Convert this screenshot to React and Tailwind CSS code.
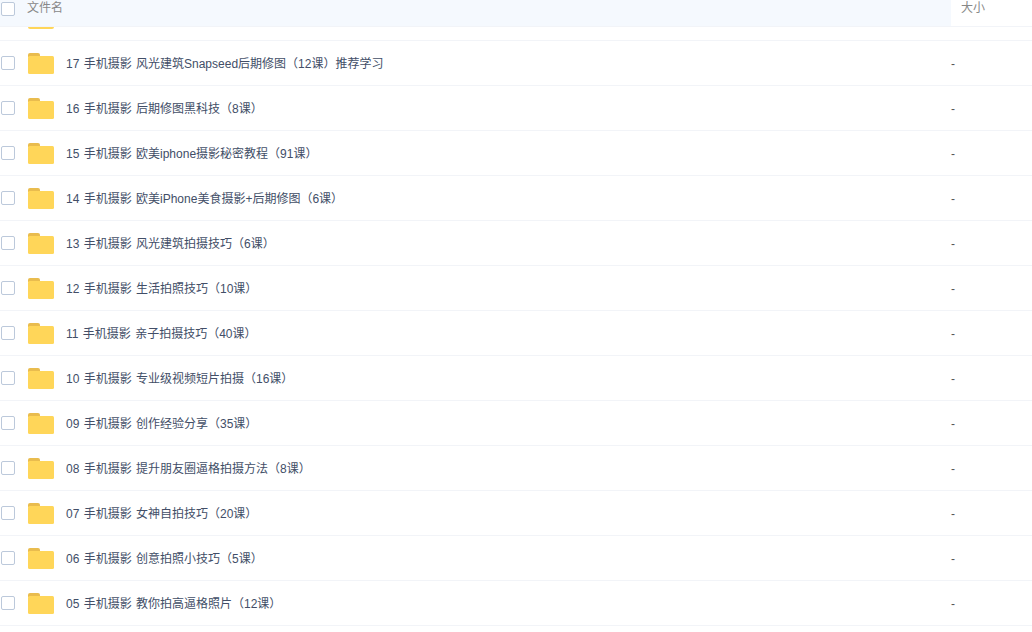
const files = [
  "17 手机摄影 风光建筑Snapseed后期修图（12课）推荐学习",
  "16 手机摄影 后期修图黑科技（8课）",
  "15 手机摄影 欧美iphone摄影秘密教程（91课）",
  "14 手机摄影 欧美iPhone美食摄影+后期修图（6课）",
  "13 手机摄影 风光建筑拍摄技巧（6课）",
  "12 手机摄影 生活拍照技巧（10课）",
  "11 手机摄影 亲子拍摄技巧（40课）",
  "10 手机摄影 专业级视频短片拍摄（16课）",
  "09 手机摄影 创作经验分享（35课）",
  "08 手机摄影 提升朋友圈逼格拍摄方法（8课）",
  "07 手机摄影 女神自拍技巧（20课）",
  "06 手机摄影 创意拍照小技巧（5课）",
  "05 手机摄影 教你拍高逼格照片（12课）",
];

const FolderIcon = () => (
  <svg width="26" height="21" viewBox="0 0 26 21" className="block">
    <path d="M0 2a2 2 0 0 1 2-2h8a2 2 0 0 1 2 2v2H0z" fill="#e9bc4e" />
    <rect x="0" y="3" width="26" height="18" rx="1.5" fill="#ffd659" />
  </svg>
);

const Checkbox = () => (
  <span className="block w-[14px] h-[14px] shrink-0 bg-white border border-[#bcc9db] rounded-[2px]" />
);

export default function App() {
  return (
    <div className="w-[1032px] h-[632px] overflow-hidden bg-white font-['Liberation_Sans','Noto_Sans_CJK_SC',sans-serif] text-xs">
      {/* Header */}
      <div className="flex h-[27px] border-b border-[#f2f4f8]">
        <div className="flex w-[951px] bg-[#f5f9fe] pl-[1px] pt-[2px]">
          <Checkbox />
          <span className="ml-3 -mt-[2px] leading-[16px] text-[#888888]">文件名</span>
        </div>
        <span className="pl-[10px] leading-[16px] text-[#888888]">大小</span>
      </div>

      {/* Row scrolled under the header */}
      <div className="h-[14px] overflow-hidden border-b border-[#f2f4f8] pl-[28px]">
        <div className="h-[2px] w-[26px] bg-[#ffd659] rounded-b-[2px]" />
      </div>

      {files.map((name) => (
        <div key={name} className="flex items-center h-[45px] border-b border-[#f2f4f8] pl-[1px]">
          <Checkbox />
          <span className="ml-[13px] mt-[1px] shrink-0">
            <FolderIcon />
          </span>
          <span className="ml-3 mt-[1px] w-[885px] text-[#424e67] whitespace-pre [word-spacing:1px]">{name}</span>
          <span className="mt-[1px] text-[#555555]">-</span>
        </div>
      ))}
    </div>
  );
}
